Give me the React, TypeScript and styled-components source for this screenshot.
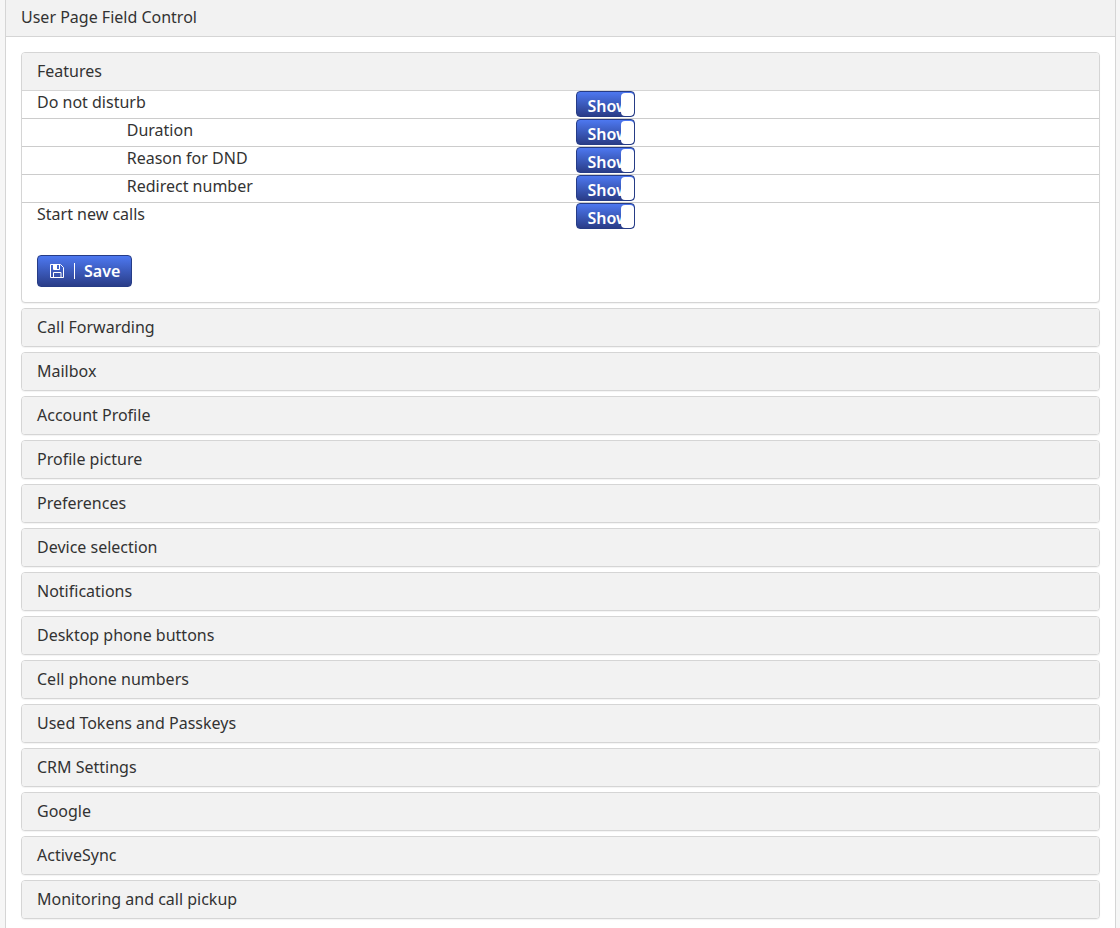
import React, { useState } from "react";
import styled, { createGlobalStyle } from "styled-components";

const GlobalStyle = createGlobalStyle`
  *, *::before, *::after { box-sizing: border-box; }
  body {
    margin: 0;
    background: #f6f6f6;
    color: #333;
    font: 400 16px/22px "Noto Sans", "Open Sans", sans-serif;
  }
`;

const Page = styled.main`
  margin: 0 4px 0 5px;
  min-height: 100vh;
  background: #fff;
  border: 1px solid #d5d5d5;
  border-width: 0 1px;
`;

const PageTitle = styled.h1`
  margin: 0;
  padding: 6px 15px 8px;
  background: #f2f2f2;
  border-bottom: 1px solid #d5d5d5;
  font-size: 16px;
  font-weight: 400;
`;

const Sections = styled.div`
  display: flex;
  flex-direction: column;
  gap: 5px;
  padding: 15px 15px 8px;
`;

const Panel = styled.section`
  background: #fff;
  border: 1px solid #d5d5d5;
  border-radius: 4px;
  box-shadow: 0 1px 1px rgba(0, 0, 0, 0.05);
  overflow: hidden;
`;

const PanelHeading = styled.h2`
  margin: 0;
  font-size: 16px;
  font-weight: 400;
`;

const PanelToggle = styled.button`
  display: block;
  width: 100%;
  padding: 7px 15px 8px;
  background: #f2f2f2;
  border: 0;
  color: inherit;
  font: inherit;
  text-align: left;
  cursor: pointer;
`;

const PanelBody = styled.form`
  border-top: 1px solid #d5d5d5;
  padding-bottom: 15px;
`;

const FieldRow = styled.div`
  display: grid;
  grid-template-columns: repeat(12, 1fr);
  height: 28px;
  border-bottom: 1px solid #ccc;

  &:last-of-type { border-bottom-color: transparent; }
`;

const FieldLabel = styled.label<{ $nested?: boolean }>`
  grid-column: ${(p) => (p.$nested ? 2 : 1)} / 7;
  padding-left: 15px;
`;

const SwitchCell = styled.div`
  grid-column: 7 / 13;
  padding-left: 15px;
`;

const Switch = styled.label<{ $on: boolean }>`
  position: relative;
  display: flex;
  flex-direction: ${(p) => (p.$on ? "row" : "row-reverse")};
  width: 59px;
  height: 26px;
  border: 1px solid #263c86;
  border-radius: 4px;
  overflow: hidden;
  background: ${(p) => (p.$on ? "linear-gradient(#4d78f0, #2a3d88)" : "#e6e6e6")};
  color: ${(p) => (p.$on ? "#fff" : "#333")};
  cursor: pointer;
`;

const SwitchInput = styled.input`
  position: absolute;
  inset: 0;
  margin: 0;
  opacity: 0;
  cursor: pointer;
`;

const SwitchText = styled.span`
  width: 45px;
  padding: 3px 0 0 11px;
  overflow: hidden;
  font-weight: 600;
  white-space: nowrap;
`;

const SwitchKnob = styled.span`
  flex: 1;
  margin: 1px 0 0 -1px;
  background: #fff;
  border-radius: 4px;
`;

const SaveButton = styled.button`
  display: flex;
  align-items: center;
  height: 32px;
  margin: 24px 15px 0;
  padding: 0 11px;
  border: 1px solid #263c86;
  border-radius: 4px;
  background: linear-gradient(#4d78f0, #2a3d88);
  color: #fff;
  font: inherit;
  font-weight: 600;
  cursor: pointer;
`;

const SaveIcon = styled.svg`
  width: 16px;
  height: 16px;
`;

const Divider = styled.span`
  width: 1px;
  height: 16px;
  margin: 0 9px;
  background: #fff;
`;

const fields = [
  { id: "dnd", label: "Do not disturb" },
  { id: "duration", label: "Duration", nested: true },
  { id: "reason", label: "Reason for DND", nested: true },
  { id: "redirect", label: "Redirect number", nested: true },
  { id: "calls", label: "Start new calls" },
];

const sections = [
  "Call Forwarding",
  "Mailbox",
  "Account Profile",
  "Profile picture",
  "Preferences",
  "Device selection",
  "Notifications",
  "Desktop phone buttons",
  "Cell phone numbers",
  "Used Tokens and Passkeys",
  "CRM Settings",
  "Google",
  "ActiveSync",
  "Monitoring and call pickup",
];

function Field({ id, label, nested }: { id: string; label: string; nested?: boolean }) {
  const [on, setOn] = useState(true);
  return (
    <FieldRow>
      <FieldLabel htmlFor={id} $nested={nested}>{label}</FieldLabel>
      <SwitchCell>
        <Switch $on={on}>
          <SwitchInput id={id} type="checkbox" checked={on} onChange={(e) => setOn(e.target.checked)} />
          <SwitchText>{on ? "Show" : "Hide"}</SwitchText>
          <SwitchKnob />
        </Switch>
      </SwitchCell>
    </FieldRow>
  );
}

export default function App() {
  const [open, setOpen] = useState(true);
  return (
    <>
      <GlobalStyle />
      <Page>
        <PageTitle>User Page Field Control</PageTitle>
        <Sections>
          <Panel>
            <PanelHeading>
              <PanelToggle type="button" aria-expanded={open} onClick={() => setOpen(!open)}>Features</PanelToggle>
            </PanelHeading>
            {open && (
              <PanelBody onSubmit={(e) => e.preventDefault()}>
                {fields.map((f) => <Field key={f.id} {...f} />)}
                <SaveButton type="submit">
                  <SaveIcon viewBox="0 0 16 16" fill="none" stroke="#fff" aria-hidden="true">
                    <path d="M1.5 1.5H11.5L14.5 4.5V14.5H1.5Z" strokeLinejoin="round" />
                    <path d="M4.5 14.5V9.5H12V14.5" />
                    <path d="M4.5 1.5V6.5H10.5V1.5" />
                    <path d="M5 2H8V6H5Z" fill="#fff" stroke="none" />
                  </SaveIcon>
                  <Divider />
                  Save
                </SaveButton>
              </PanelBody>
            )}
          </Panel>
          {sections.map((name) => (
            <Panel key={name}>
              <PanelHeading>
                <PanelToggle type="button" aria-expanded={false}>{name}</PanelToggle>
              </PanelHeading>
            </Panel>
          ))}
        </Sections>
      </Page>
    </>
  );
}
